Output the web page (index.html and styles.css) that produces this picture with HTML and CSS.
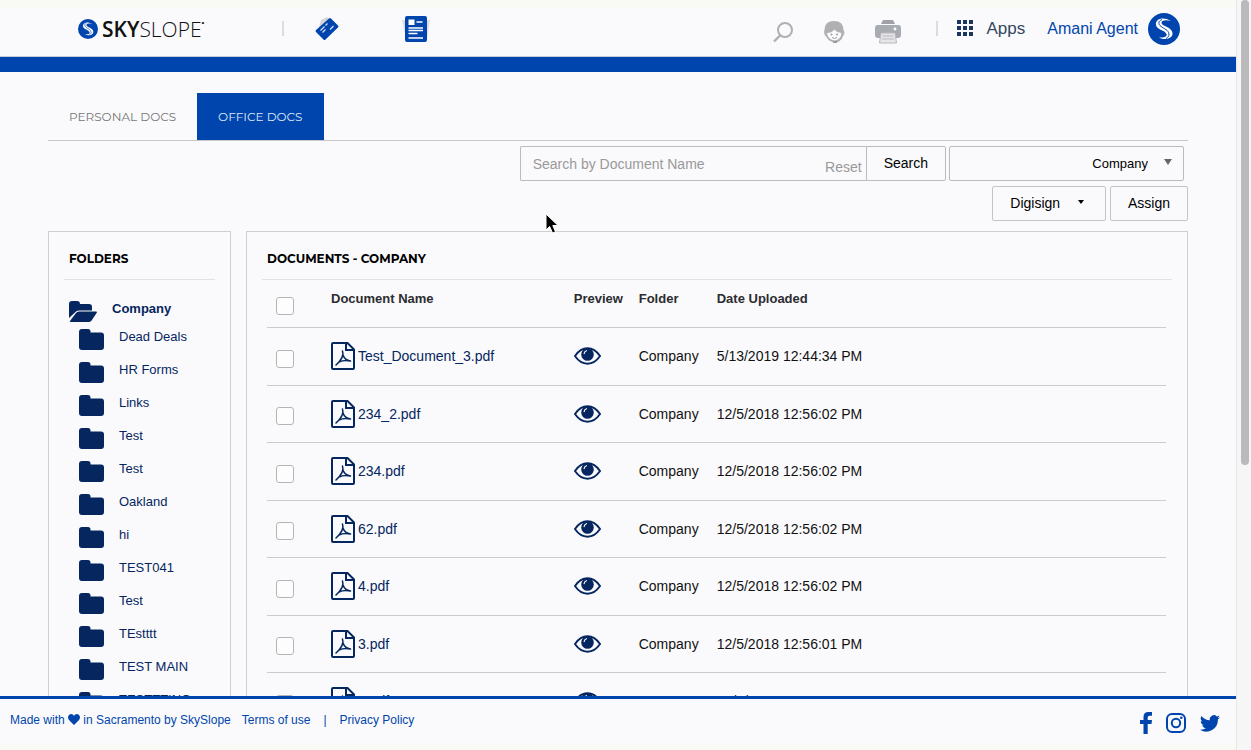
FILE: index.html
```html
<!DOCTYPE html>
<html lang="en">
<head>
    <meta charset="UTF-8">
    <meta name="viewport" content="width=device-width, initial-scale=1.0">
    <title>SkySlope - Office Docs</title>

    <link rel="stylesheet" href="styles.css">
</head>
<body>

    <!-- Shared icons -->
    <svg class="sprite" aria-hidden="true">
        <symbol id="icon-logo" viewBox="0 0 32 32">
            <circle cx="16" cy="16" r="16" fill="#0045ad"/>
            <path d="M23 8C15 3 7 6 8 12c1 5 9 5 10.500 9 .8 2.500-2 4-7.500 3.500C18 28 25 25 24.500 20 24 14 14 13.500 13.500 10c-.3-2.500 4-3.500 9.500-2z" fill="#fff"/>
            <path d="M14 6.500c-4 1.500-4 4.500-1 7 3 2.200 7.500 3.500 8 7.500.2 2-1 3.500-3 4.500" fill="none" stroke="#0045ad" stroke-width="1"/>
        </symbol>
        <symbol id="icon-folder" viewBox="0 0 25 21">
            <path d="M3 0h6q2.500 0 2.500 2.500V3.500H22q3 0 3 3V18q0 3-3 3H3q-3 0-3-3V3q0-3 3-3z"/>
        </symbol>
        <symbol id="icon-folder-open" viewBox="0 0 28 21">
            <path d="M0 17V3q0-3 3-3h5q3 0 3 3h9q3 0 3 3v3.500H10q-2.500 0-4 2z"/>
            <path d="M1 20l6-8q1.200-1.500 3-1.500h17q1.500 0 .6 1.500l-5 7.500Q21.500 21 19.500 21H2q-2 0-1-1z"/>
        </symbol>
        <symbol id="icon-pdf" viewBox="0 0 24 28">
            <path d="M1 2q0-1 1-1h14.500L23 7.500V26q0 1-1 1H2q-1 0-1-1zM15 1v7h8" fill="none" stroke="currentColor" stroke-width="2"/>
            <path d="M11.500 9c1.500 4-1 9-6.500 14M12 13c1 3 4 5.500 7.500 6M8 20c3-1.500 7-2 11.500-1" fill="none" stroke="currentColor" stroke-width="1.500" stroke-linecap="round"/>
        </symbol>
        <symbol id="icon-eye" viewBox="0 0 28 18">
            <path d="M1 9Q6.500 1 14 1t13 8q-5.500 8-13 8T1 9z" fill="none" stroke="currentColor" stroke-width="2"/>
            <circle cx="14" cy="7.500" r="6.500"/>
            <path d="M10.500 6.500q.5-2.500 2.500-3" fill="none" stroke="#fafafc" stroke-width="1.200" stroke-linecap="round"/>
        </symbol>
    </svg>

    <div class="page">
        <header class="header">
            <a href="#" class="logo" aria-label="SkySlope">
                <svg class="logo-mark"><use href="#icon-logo"/></svg>
                <span class="logo-text"><b>SKY</b>SLOPE</span><sup class="logo-reg">&bull;</sup>
            </a>
            <nav class="main-nav">
                <a href="#" aria-label="Transactions">
                    <svg width="26" height="26" viewBox="0 0 26 26">
                        <path d="M5 11L7 4l6-3 3 3z" fill="#d5d5d8"/>
                        <path d="M15 2.500q1-1 2 0l7 7q1 1 0 2L11.500 23.500q-1 1-2 0L2 16q-1-1 0-2z" fill="#0045ad"/>
                        <path d="M6.500 14.500l4-4M11.500 9.500l2-2M8.500 16.500l3-3M16 13.500l3.500-3.500" stroke="#d9e3f5" stroke-width="1.200"/>
                    </svg>
                </a>
                <a href="#" aria-label="Documents">
                    <svg width="28" height="28" viewBox="0 0 28 28">
                        <path d="M0 5l28 0-3 19H4z" fill="#dedee2"/>
                        <rect x="3" y="1" width="22" height="26" rx="2" fill="#0045ad"/>
                        <path d="M6.500 4.500h6V10h-6z" fill="#fff"/>
                        <path d="M14.500 7h6M6.500 13H21M6.500 15.500H21M6.500 18.500h9M6.500 23H21" stroke="#fff" stroke-width="1.300"/>
                    </svg>
                </a>
            </nav>
            <div class="tools">
                <button type="button" aria-label="Find">
                    <svg width="20" height="20" viewBox="0 0 20 20">
                        <circle cx="12" cy="8" r="7" fill="none" stroke="#b0b0b3" stroke-width="2"/>
                        <path d="M7.500 13L1 19.500" stroke="#b0b0b3" stroke-width="2.400"/>
                    </svg>
                </button>
                <button type="button" aria-label="Support">
                    <svg width="22" height="24" viewBox="0 0 22 24">
                        <path d="M1.500 10Q1.500 1 11 1t9.500 9q2 3-.5 6-1 4-6 6.500h-3Q5 21 3.500 17 0 14 1.500 10z" fill="#b0b0b3"/>
                        <path d="M4 13q4.500 0 7.500-3.500 2 3 7 3.500-.5 7-7 7.500-6.500-.5-7.500-7.500z" fill="#fafafc"/>
                        <circle cx="8.500" cy="14.500" r="1" fill="#9c9ca0"/>
                        <circle cx="14" cy="14.500" r="1" fill="#9c9ca0"/>
                        <path d="M9 17.500q2.500 2 5 0" fill="none" stroke="#9c9ca0"/>
                        <path d="M10 21h4v2h-4z" fill="#9c9ca0"/>
                    </svg>
                </button>
                <button type="button" aria-label="Print">
                    <svg width="26" height="24" viewBox="0 0 26 24">
                        <path d="M8 0h10l2 4H6z" fill="#9fa0a8"/>
                        <rect y="5" width="26" height="13" rx="3" fill="#a9abb2"/>
                        <circle cx="20" cy="9" r="1.400" fill="#fff"/>
                        <path d="M6 13h14l1.500 10h-17z" fill="#e6e6e9" stroke="#b9b9bd"/>
                        <path d="M7.500 16h11M7 19h12" stroke="#b9b9bd"/>
                    </svg>
                </button>
            </div>
            <a href="#" class="apps">
                <svg width="17" height="17" viewBox="0 0 17 17">
                    <path d="M0 0h4v4H0zM6 0h4v4H6zM12 0h4v4h-4zM0 6h4v4H0zM6 6h4v4H6zM12 6h4v4h-4zM0 12h4v4H0zM6 12h4v4H6zM12 12h4v4h-4z" fill="#1c355e"/>
                </svg>
                Apps
            </a>
            <a href="#" class="user">
                Amani Agent
                <svg class="avatar"><use href="#icon-logo"/></svg>
            </a>
        </header>

        <main class="content">
            <nav class="tabs">
                <a href="#" class="tab">PERSONAL DOCS</a>
                <a href="#" class="tab active">OFFICE DOCS</a>
            </nav>

            <form class="search-row">
                <div class="search-box">
                    <input type="text" placeholder="Search by Document Name" aria-label="Search by Document Name">
                    <button type="reset" class="reset">Reset</button>
                </div>
                <button type="button" class="btn btn-search">Search</button>
                <select class="office" aria-label="Office">
                    <option>Company</option>
                </select>
            </form>
            <div class="actions">
                <button type="button" class="btn">Digisign <span class="caret"></span></button>
                <button type="button" class="btn">Assign</button>
            </div>

            <div class="panels">
                <aside class="panel folders">
                    <h2>FOLDERS</h2>
                    <a href="#" class="root"><svg><use href="#icon-folder-open"/></svg>Company</a>
                    <ul id="folder-list"></ul>
                </aside>

                <section class="panel documents">
                    <h2>DOCUMENTS - COMPANY</h2>
                    <table>
                        <thead>
                            <tr>
                                <th class="col-check"><input type="checkbox" aria-label="Select all"></th>
                                <th class="col-name">Document Name</th>
                                <th class="col-preview">Preview</th>
                                <th class="col-folder">Folder</th>
                                <th>Date Uploaded</th>
                            </tr>
                        </thead>
                        <tbody id="document-rows"></tbody>
                    </table>
                </section>
            </div>
        </main>

        <footer class="footer">
            <span class="made">Made with
                <svg width="12" height="11" viewBox="0 0 12 11"><path d="M6 11L1 6Q-.5 4 .3 2 1.200 0 3.200 0 5 0 6 1.700 7 0 8.800 0q2 0 2.900 2 .8 2-.7 4z"/></svg>
                in Sacramento by SkySlope</span>
            <a href="#">Terms of use</a>
            <span class="divider">|</span>
            <a href="#">Privacy Policy</a>
            <div class="social">
                <a href="#" aria-label="Facebook">
                    <svg width="12" height="22" viewBox="0 0 12 22"><path d="M3.500 22V12H0V8h3.500V5q0-5 5-5H12v3.800H9.500Q7.700 3.800 7.700 5.500V8H12l-.5 4H7.700v10z"/></svg>
                </a>
                <a href="#" aria-label="Instagram">
                    <svg width="20" height="20" viewBox="0 0 20 20"><rect x="1" y="1" width="18" height="18" rx="5" fill="none" stroke="currentColor" stroke-width="2"/><circle cx="10" cy="10" r="4.200" fill="none" stroke="currentColor" stroke-width="2"/><circle cx="15.300" cy="4.800" r="1.300"/></svg>
                </a>
                <a href="#" aria-label="Twitter">
                    <svg width="20" height="17" viewBox="0 0 24 20"><path d="M24 2.400a10 10 0 0 1-2.800.8A5 5 0 0 0 23.300.500a10 10 0 0 1-3.100 1.200 4.900 4.900 0 0 0-8.400 4.500A14 14 0 0 1 1.700 1a4.900 4.900 0 0 0 1.500 6.600 5 5 0 0 1-2.200-.6 4.900 4.900 0 0 0 3.900 4.900 5 5 0 0 1-2.200.1 4.900 4.900 0 0 0 4.600 3.400A10 10 0 0 1 0 17.500 14 14 0 0 0 21.500 5a10 10 0 0 0 2.500-2.600z"/></svg>
                </a>
            </div>
        </footer>
    </div>

    <div class="scroll-track"><div class="scroll-thumb"></div></div>

    <svg class="pointer" width="14" height="21" viewBox="0 0 14 21" aria-hidden="true">
        <path d="M1 1v16l3.700-3.500L7.500 20l3-1.200-2.700-6.300H13z" fill="#000" stroke="#fff"/>
    </svg>

    <script>
        const folders = ['Dead Deals', 'HR Forms', 'Links', 'Test', 'Test', 'Oakland', 'hi',
            'TEST041', 'Test', 'TEstttt', 'TEST MAIN', 'TESTTTING'];

        const documents = [
            { name: 'Test_Document_3.pdf', date: '5/13/2019 12:44:34 PM' },
            { name: '234_2.pdf', date: '12/5/2018 12:56:02 PM' },
            { name: '234.pdf', date: '12/5/2018 12:56:02 PM' },
            { name: '62.pdf', date: '12/5/2018 12:56:02 PM' },
            { name: '4.pdf', date: '12/5/2018 12:56:02 PM' },
            { name: '3.pdf', date: '12/5/2018 12:56:01 PM' },
            { name: '2.pdf', date: '12/5/2018 12:56:01 PM' }
        ];

        document.getElementById('folder-list').innerHTML = folders.map(name => `
            <li><a href="#"><svg><use href="#icon-folder"/></svg>${name}</a></li>`).join('');

        document.getElementById('document-rows').innerHTML = documents.map(doc => `
            <tr>
                <td><input type="checkbox" aria-label="Select ${doc.name}"></td>
                <td><a href="#" class="file"><svg><use href="#icon-pdf"/></svg>${doc.name}</a></td>
                <td><a href="#" class="preview" aria-label="Preview ${doc.name}"><svg><use href="#icon-eye"/></svg></a></td>
                <td>Company</td>
                <td>${doc.date}</td>
            </tr>`).join('');
    </script>
</body>
</html>
```
FILE: styles.css
```css
* {
    box-sizing: border-box;
}

body {
    margin: 0;
    height: 100vh;
    display: flex;
    overflow: hidden;
    background-color: #fafafc;
    color: #111;
    font-family: "Liberation Sans", Arial, sans-serif;
    font-size: 14px;
}

a {
    color: #05265f;
    text-decoration: none;
}

button, input, select {
    font-family: inherit;
    font-size: 14px;
}

svg {
    fill: currentColor;
}

.sprite {
    position: absolute;
    width: 0;
    height: 0;
}

.page {
    flex: 1;
    min-width: 0;
    display: flex;
    flex-direction: column;
}

/* Header */
.header {
    flex: none;
    display: flex;
    align-items: center;
    height: 72px;
    padding: 0 56px 8px 78px;
    border-top: 8px solid #fafaf4;
    border-bottom: 15px solid #0045ad;
    box-shadow: inset 0 -1px #c9ccd6;
}

.logo {
    display: flex;
    align-items: center;
    color: #111;
    width: 204px;
}

.logo-mark {
    width: 20px;
    height: 20px;
    margin-right: 4px;
}

.logo-text {
    font-family: "Open Sans", sans-serif;
    font-size: 21px;
    font-weight: 300;
    line-height: 20px;
}

.logo-text b {
    font-weight: 600;
}

.logo-reg {
    margin-bottom: 12px;
    font-size: 8px;
}

.main-nav {
    display: flex;
    align-items: center;
    gap: 62px;
    padding-left: 32px;
    margin-right: auto;
    background: linear-gradient(#dcdcdf, #dcdcdf) left center / 2px 15px no-repeat;
}

.main-nav a, .tools button {
    display: flex;
}

.tools {
    display: flex;
    align-items: center;
    gap: 30px;
    padding-right: 35px;
    padding-top: 6px;
}

.tools button {
    padding: 0;
    border: none;
    background: none;
}

.apps, .user {
    display: flex;
    align-items: center;
    font-size: 16px;
}

.apps {
    gap: 13px;
    padding-left: 21px;
    color: #33475f;
    font-size: 17px;
    background: linear-gradient(#dcdcdf, #dcdcdf) left center / 2px 15px no-repeat;
}

.user {
    gap: 10px;
    margin-left: 22px;
    color: #0045ad;
}

.avatar {
    width: 32px;
    height: 32px;
}

/* Content */
.content {
    flex: 1;
    min-height: 0;
    overflow: hidden;
    padding: 21px 48px 0;
}

.tabs {
    display: flex;
    border-bottom: 1px solid #c8c8c8;
}

.tab {
    padding: 0 21px;
    line-height: 47px;
    font-family: Montserrat, Inter, sans-serif;
    font-size: 12px;
    color: #777;
}

.tab.active {
    background-color: #0045ad;
    color: #dfe8f6;
}

.search-row, .actions {
    display: flex;
    justify-content: flex-end;
}

.search-row {
    padding: 5px 4px 5px 0;
}

.search-box {
    display: flex;
    width: 346px;
    height: 35px;
    border: 1px solid #bbb;
    border-right: none;
    border-radius: 2px 0 0 2px;
}

.search-box input {
    flex: 1;
    min-width: 0;
    padding: 0 12px;
    border: none;
    background: none;
}

.search-box input::placeholder {
    color: #999;
}

.reset {
    padding: 6px 4px 0;
    border: none;
    background: none;
    color: #999;
}

.btn {
    height: 35px;
    padding: 0 17px 2px;
    border: 1px solid #c4c4c4;
    border-radius: 2px;
    background-color: #fafafc;
    color: #000;
}

.btn-search {
    border-color: #bbb;
    border-radius: 0 2px 2px 0;
}

.office {
    width: 235px;
    height: 35px;
    margin-left: 3px;
    padding: 0 35px 0 12px;
    border: 1px solid #bbb;
    border-radius: 2px;
    appearance: none;
    background: url("data:image/svg+xml,%3Csvg xmlns='http://www.w3.org/2000/svg' width='8' height='6'%3E%3Cpath d='M0 0h8L4 6z' fill='%23666'/%3E%3C/svg%3E") right 11px top 12px no-repeat;
    color: #000;
    font-size: 13px;
    text-align-last: right;
}

.actions {
    gap: 4px;
}

.caret {
    display: inline-block;
    margin: 0 4px 4px 14px;
    border: 3px solid transparent;
    border-top: 4px solid #000;
    border-bottom: none;
}

/* Panels */
.panels {
    display: flex;
    align-items: flex-start;
    gap: 15px;
    margin-top: 10px;
}

.panel {
    min-height: 700px;
    padding: 15px;
    border: 1px solid #cfcfcf;
}

.panel h2 {
    margin: 0;
    padding: 0 5px 8px;
    border-bottom: 1px solid #e2e2e2;
    font-family: Montserrat, Inter, sans-serif;
    font-size: 12px;
    font-weight: 700;
    line-height: 24px;
    color: #000;
}

.folders {
    flex: none;
    width: 183px;
    font-size: 13px;
}

.folders a {
    display: flex;
    white-space: nowrap;
}

.folders .root {
    gap: 15px;
    padding: 20px 0 0 5px;
    font-weight: 700;
    line-height: 18px;
}

.root svg {
    width: 28px;
    height: 21px;
    margin-top: 1px;
}

.folders ul {
    list-style: none;
    margin: 0;
    padding: 6px 0 0 15px;
}

.folders li {
    height: 33px;
}

.folders li a {
    gap: 15px;
    line-height: 18px;
}

.folders li svg {
    width: 25px;
    height: 21px;
    margin-top: 1px;
}

.documents {
    flex: 1;
    min-width: 0;
}

table {
    width: calc(100% - 11px);
    margin-left: 5px;
    border-collapse: collapse;
    table-layout: fixed;
}

th, td {
    padding: 0;
    border-bottom: 1px solid #ccc;
    text-align: left;
}

th {
    height: 47px;
    padding-bottom: 9px;
    font-size: 13px;
    color: #2c2c30;
}

td {
    height: 58px;
}

tr:nth-child(even) td {
    height: 57px;
}

.col-check {
    width: 64px;
    padding-bottom: 0;
}

.col-name {
    width: 27%;
}

.col-preview {
    width: 65px;
}

.col-folder {
    width: 78px;
}

input[type="checkbox"] {
    appearance: none;
    display: block;
    width: 18px;
    height: 18px;
    margin: 5px 0 0 9px;
    border: 1px solid #b5b5b5;
    border-radius: 3px;
    background-color: #fdfdfd;
}

.file {
    display: flex;
    align-items: center;
    gap: 3px;
}

.file svg {
    width: 24px;
    height: 28px;
}

.preview svg {
    display: block;
    width: 27px;
    height: 18px;
}

/* Footer */
.footer {
    flex: none;
    display: flex;
    align-items: center;
    height: 54px;
    padding: 0 16px 4px 10px;
    border-top: 3px solid #0045ad;
    border-bottom: 5px solid #fafaf4;
    font-size: 12px;
    color: #0045ad;
}

.footer a {
    color: #0045ad;
}

.made {
    margin-right: 11px;
}

.made svg {
    vertical-align: -1px;
}

.divider {
    margin: 0 13px;
}

.social {
    display: flex;
    align-items: center;
    gap: 14px;
    margin-left: auto;
    padding-top: 6px;
}

.social a {
    display: flex;
}

/* Page scrollbar */
.scroll-track {
    flex: none;
    width: 15px;
    padding: 0 2px 0 4px;
    border-left: 1px solid #e8e8e8;
    background-color: #f6f6f6;
}

.scroll-thumb {
    height: 62%;
    border-radius: 4px;
    background-color: #bababc;
}

.pointer {
    position: absolute;
    left: 545px;
    top: 213px;
}
```
